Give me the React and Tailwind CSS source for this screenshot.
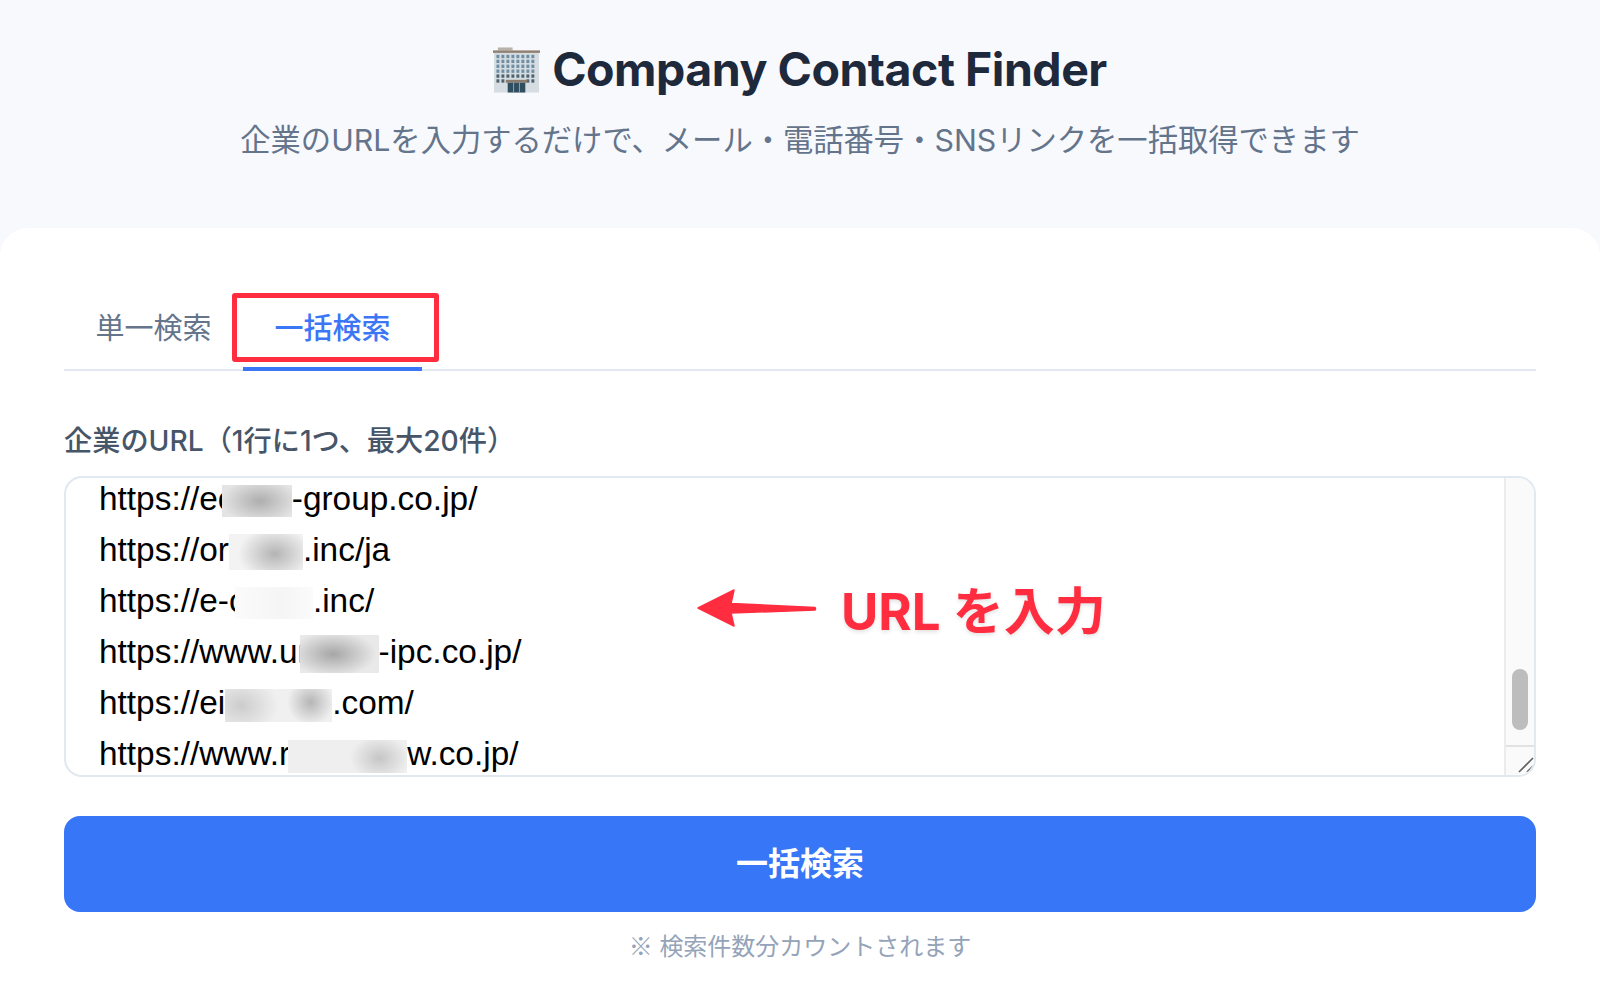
const stack = "font-[Inter,'Noto_Sans_CJK_JP',sans-serif]";

function Building() {
  const wins = [];
  for (let r = 0; r < 6; r++) {
    for (let c = 0; c < 8; c++) {
      if (r === 5 && c > 1 && c < 6) continue;
      wins.push(<rect key={r + "-" + c} x={3.5 + c * 5.1} y={7.5 + r * 5} width="3" height="3.4" fill={r < 4 ? "#6f8ea3" : "#4e6270"} />);
    }
  }
  return (
    <svg width="47" height="46" viewBox="0 0 48 46" className="shrink-0">
      <rect x="5" y="0" width="15" height="3" fill="#b8b2a8" />
      <rect x="1" y="5" width="46" height="41" fill="#d6dde2" />
      <rect x="0" y="3" width="48" height="2.5" fill="#8f7f70" />
      {wins}
      <rect x="13" y="33" width="22" height="3" fill="#8a7d70" />
      <rect x="15" y="36" width="18" height="10" fill="#2f4f60" />
      <path d="M21 36v10M27 36v10" stroke="#a9bcc6" strokeWidth="0.8" />
    </svg>
  );
}

const lines = [
  { a: "https://ec", ml: -12.7, w: 70, h: 32, b: "-group.co.jp/", bg: "radial-gradient(ellipse 55% 70% at 54% 50%, #aeaeae, #e4e4e4)" },
  { a: "https://or", ml: 0, w: 74, h: 36, b: ".inc/ja", bg: "radial-gradient(ellipse 50% 75% at 62% 55%, #b4b4b4, #f3f3f3)" },
  { a: "https://e-c", ml: -10.7, w: 78, h: 32, b: ".inc/", bg: "linear-gradient(90deg, #fbfbfb, #f5f5f5 60%, #fbfbfb)" },
  { a: "https://www.un", ml: -16.6, w: 79, h: 38, b: "-ipc.co.jp/", bg: "radial-gradient(ellipse 55% 60% at 42% 50%, #a6a6a6, #e9e9e9)" },
  { a: "https://ei", ml: 0, w: 107, h: 33, b: ".com/", bg: "radial-gradient(ellipse 22% 70% at 80% 40%, #b6b6b6, transparent), radial-gradient(ellipse 35% 90% at 15% 50%, #cccccc, #f0f0f0)" },
  { a: "https://www.r", ml: -2, w: 119, h: 33, b: "w.co.jp/", bg: "radial-gradient(ellipse 25% 70% at 77% 55%, #c6c6c6, transparent), linear-gradient(#efefef, #efefef)" },
];

export default function App() {
  return (
    <div className={"relative flex h-[990px] flex-col overflow-hidden bg-[#f8f9fd] " + stack}>
      <header className="flex h-[228px] shrink-0 flex-col items-center pt-[41px]">
        <h1 className="flex h-[58px] items-center gap-[12px] text-[46.5px] font-bold tracking-[-0.5px] text-[#1e293b]">
          <Building />
          <span>Company Contact Finder</span>
        </h1>
        <p className="mt-[20px] text-[30.3px] leading-[42px] text-[#64748b]">
          企業のURLを入力するだけで、メール・電話番号・SNSリンクを一括取得できます
        </p>
      </header>

      <main className="flex-1 rounded-t-[28px] bg-white px-16">
        <div className="flex h-[143px] items-end border-b-2 border-[#e2e8f0]">
          <button className="-mb-[2px] h-[80px] w-[179px] border-b-4 border-transparent text-[29px] text-[#64748b]">単一検索</button>
          <button className="-mb-[2px] h-[80px] w-[179px] border-b-4 border-[#3b76f6] text-[29px] font-medium text-[#3b76f6]">一括検索</button>
        </div>

        <label className="mt-[50px] block text-[28.2px] font-medium leading-[40px] text-[#475569]">
          企業のURL（1行に1つ、最大20件）
        </label>

        <div className="relative mt-[15px] h-[301px] overflow-hidden rounded-[18px] border-2 border-[#e2e8f0] bg-white">
          <div className="-mt-[5px] pl-[33px] text-[33.4px] leading-[51px] text-black font-['Liberation_Sans',sans-serif]">
            {lines.map((l, i) => (
              <div key={i} className="h-[51px] whitespace-nowrap">
                <span>{l.a}</span>
                <span className="inline-block align-middle" style={{ marginLeft: l.ml, width: l.w, height: l.h, background: l.bg }} />
                <span>{l.b}</span>
              </div>
            ))}
          </div>
          <div className="absolute inset-y-0 right-0 flex w-[30px] flex-col border-l-2 border-[#ececec] bg-[#fafafa]">
            <div className="relative flex-1">
              <div className="absolute left-[6px] top-[191px] h-[61px] w-[16px] rounded-full bg-[#bdbdbd]" />
            </div>
            <div className="relative h-[30px] border-t-2 border-[#e2e2e2] bg-[#fafafa]">
              <svg width="28" height="28" viewBox="0 0 28 28" className="absolute inset-0">
                <path d="M13 25L27 11M21 25L27 19" stroke="#5f5f5f" strokeWidth="1.6" />
              </svg>
            </div>
          </div>
        </div>

        <button className="mt-[39px] h-[96px] w-full rounded-[16px] bg-[#3776f6] text-[32px] font-bold text-white">一括検索</button>
        <p className="mt-[15px] text-center text-[24px] leading-[36px] text-[#94a3b8]">
          <span className="font-['Noto_Sans_CJK_JP',sans-serif]">※</span> 検索件数分カウントされます
        </p>
      </main>

      <div className="absolute left-[232px] top-[293px] h-[69px] w-[207px] rounded-[3px] border-[5px] border-[#ff2d3f]" />
      <svg width="122" height="40" viewBox="0 0 122 40" className="absolute left-[696px] top-[588px]">
        <path d="M2 20L38 2L35 15.5L119 19.5Q120 21 119 22L35 25L38 38Z" fill="#ff2d3f" stroke="#ff2d3f" strokeLinejoin="round" strokeWidth="1.5" />
      </svg>
      <div className="absolute left-[841px] top-[578px] whitespace-nowrap text-[51px] font-bold leading-[68px] text-[#ff2d3f] [text-shadow:0_2px_4px_rgba(0,0,0,0.12)]">
        URL を入力
      </div>
    </div>
  );
}
